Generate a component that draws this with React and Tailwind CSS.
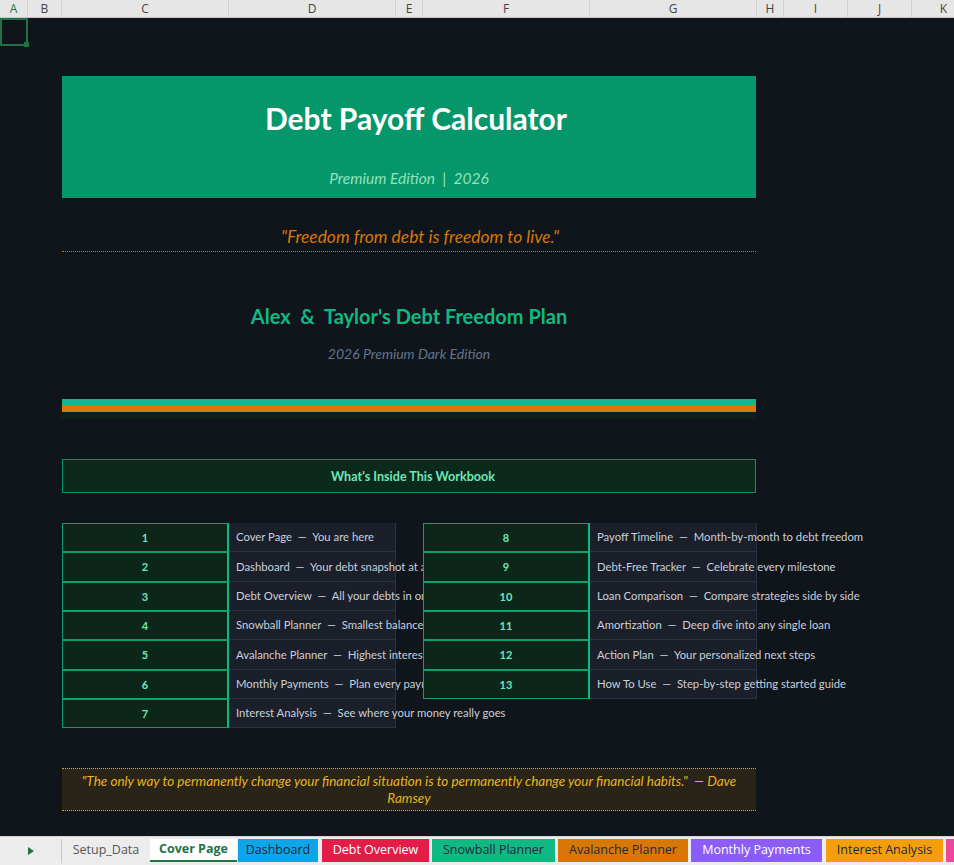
import React from 'react';

const columns = [
  { name: 'A', w: 'w-[28px]' },
  { name: 'B', w: 'w-[34px]' },
  { name: 'C', w: 'w-[167px]' },
  { name: 'D', w: 'w-[167px]' },
  { name: 'E', w: 'w-[27px]' },
  { name: 'F', w: 'w-[167px]' },
  { name: 'G', w: 'w-[167px]' },
  { name: 'H', w: 'w-[27px]' },
  { name: 'I', w: 'w-[64px]' },
  { name: 'J', w: 'w-[64px]' },
  { name: 'K', w: 'w-[64px]' },
];

const leftItems = [
  ['Cover Page', 'You are here'],
  ['Dashboard', 'Your debt snapshot at a glance'],
  ['Debt Overview', 'All your debts in one place'],
  ['Snowball Planner', 'Smallest balance first'],
  ['Avalanche Planner', 'Highest interest first'],
  ['Monthly Payments', 'Plan every payment'],
  ['Interest Analysis', 'See where your money really goes'],
];

const rightItems = [
  ['Payoff Timeline', 'Month-by-month to debt freedom'],
  ['Debt-Free Tracker', 'Celebrate every milestone'],
  ['Loan Comparison', 'Compare strategies side by side'],
  ['Amortization', 'Deep dive into any single loan'],
  ['Action Plan', 'Your personalized next steps'],
  ['How To Use', 'Step-by-step getting started guide'],
];

const rowHeights = ['h-[29px]', 'h-[30px]', 'h-[29px]', 'h-[29px]', 'h-[30px]', 'h-[29px]', 'h-[29px]'];

const tabs = [
  { label: 'Dashboard', w: 'w-[80px]', gap: 'ml-[1px]', cls: 'bg-[#0ea5e9] text-[#1e293b]' },
  { label: 'Debt Overview', w: 'w-[107px]', gap: 'ml-[4px]', cls: 'bg-[#e11d48] text-white' },
  { label: 'Snowball Planner', w: 'w-[123px]', gap: 'ml-[3px]', cls: 'bg-[#10b981] text-[#1e293b]' },
  { label: 'Avalanche Planner', w: 'w-[130px]', gap: 'ml-[3px]', cls: 'bg-[#d97706] text-[#1e293b]' },
  { label: 'Monthly Payments', w: 'w-[131px]', gap: 'ml-[3px]', cls: 'bg-[#8b5cf6] text-white' },
  { label: 'Interest Analysis', w: 'w-[117px]', gap: 'ml-[4px]', cls: 'bg-[#f59e0b] text-[#1e293b]' },
  { label: '', w: 'w-[20px]', gap: 'ml-[3px]', cls: 'bg-[#ec4899] text-white' },
];

function NumCell({ n }) {
  return (
    <div className="w-[167px] h-full shrink-0 bg-[#0c2619] border border-[#10a06e] border-r-2 border-r-[#10b981] flex items-center justify-center pt-[1px] text-[11px] font-bold text-[#6ee7b7]">
      {n}
    </div>
  );
}

function DescCell({ item, clip }) {
  return (
    <div className={`shrink-0 h-full ${clip ? 'w-[194px] overflow-hidden' : 'w-[167px]'}`}>
      <div className="w-[167px] h-full bg-[#1a1f2a] border-b border-r border-[#2b313d] flex items-center pl-[7px] pt-[1px] whitespace-nowrap text-[11.3px] text-[#c9d0da]">
        {item[0]}&nbsp;&nbsp;—&nbsp;&nbsp;{item[1]}
      </div>
    </div>
  );
}

export default function App() {
  return (
    <div className="w-[954px] h-[865px] flex flex-col bg-[#10151b] overflow-hidden font-['Lato',sans-serif]">
      <div className="h-[18px] flex bg-[#e6e6e6] border-b border-[#c6c6c6] shrink-0">
        {columns.map((c) => (
          <div
            key={c.name}
            className={`${c.w} shrink-0 border-r border-[#d0d0d0] flex items-center justify-center text-[12px] font-['Open_Sans',sans-serif] ${
              c.name === 'A' ? 'text-[#217346]' : 'text-[#444]'
            }`}
          >
            {c.name}
          </div>
        ))}
      </div>

      <div className="flex-1 flex flex-col overflow-hidden">
        <div className="h-[28px] flex shrink-0">
          <div className="w-[28px] h-[28px] border-2 border-[#217346] relative">
            <div className="absolute -right-[3px] -bottom-[3px] w-[5px] h-[5px] bg-[#217346]" />
          </div>
        </div>

        <div className="ml-[62px] w-[694px] flex flex-col">
          <div className="mt-[30px] h-[122px] bg-[#059669] flex flex-col items-center">
            <div className="mt-[23px] pl-[14px] h-[38px] leading-[38px] text-[30px] font-bold text-white">Debt Payoff Calculator</div>
            <div className="mt-[31px] h-[20px] leading-[20px] text-[15.5px] italic text-[#8fe3bf] whitespace-pre">Premium Edition  |  2026</div>
          </div>

          <div className="h-[54px] border-b border-dotted border-[#d97706] flex items-end justify-center pb-[3px] pl-[22px]">
            <span className="leading-[22px] text-[17.4px] italic text-[#d97706]">"Freedom from debt is freedom to live."</span>
          </div>

          <div className="mt-[50px] h-[28px] leading-[28px] text-center text-[20px] font-bold text-[#10b981] whitespace-pre">
            Alex  &  Taylor's Debt Freedom Plan
          </div>
          <div className="mt-[14px] h-[20px] leading-[20px] text-center text-[14px] italic text-[#64748b]">
            2026 Premium Dark Edition
          </div>

          <div className="mt-[35px] h-[6px] bg-[#10b981]" />
          <div className="h-[7px] bg-[#d97706]" />
          <div className="h-[7px] bg-[#0f1f1a]" />

          <div className="mt-[40px] h-[34px] bg-[#0b2a1c] border border-[#059669] flex items-center justify-center pt-[2px] pl-[8px] text-[12.6px] font-bold text-[#6ee7b7]">
            What's Inside This Workbook
          </div>

          <div className="mt-[30px] flex flex-col">
            {leftItems.map((item, i) => (
              <div key={i} className={`${rowHeights[i]} flex`}>
                <NumCell n={i + 1} />
                <DescCell item={item} clip={i < rightItems.length} />
                {i < rightItems.length && (
                  <>
                    <NumCell n={i + 8} />
                    <DescCell item={rightItems[i]} />
                  </>
                )}
              </div>
            ))}
          </div>

          <div className="mt-[40px] h-[43px] bg-[#2a2317] border-y border-dotted border-[#c9a24a] flex items-center justify-center px-[16px] text-center text-[13.5px] leading-[17px] italic text-[#e5b524]">
            "The only way to permanently change your financial situation is to permanently change your financial habits."&nbsp;&nbsp;— Dave Ramsey
          </div>
        </div>
      </div>

      <div className="h-[29px] shrink-0 bg-[#ececec] border-t border-[#d4d4d4] flex items-start overflow-hidden font-['Open_Sans',sans-serif] text-[12.5px]">
        <div className="w-[62px] h-[24px] shrink-0 flex items-center justify-center border-r border-[#c8c8c8] mt-[2px]">
          <svg width="6" height="8" viewBox="0 0 6 8">
            <path d="M0 0 L6 4 L0 8 Z" fill="#217346" />
          </svg>
        </div>
        <div className="w-[88px] h-[23px] shrink-0 flex items-center justify-center text-[#555] mt-[2px]">Setup_Data</div>
        <div className="w-[87px] h-[23px] shrink-0 bg-white border-b-2 border-[#217346] flex items-center justify-center font-bold text-[#217346] mt-[2px]">
          Cover Page
        </div>
        {tabs.map((t, i) => (
          <div
            key={i}
            className={`${t.w} ${t.gap} h-[23px] shrink-0 mt-[2px] flex items-center justify-center whitespace-nowrap ${t.cls}`}
          >
            {t.label}
          </div>
        ))}
      </div>
    </div>
  );
}
